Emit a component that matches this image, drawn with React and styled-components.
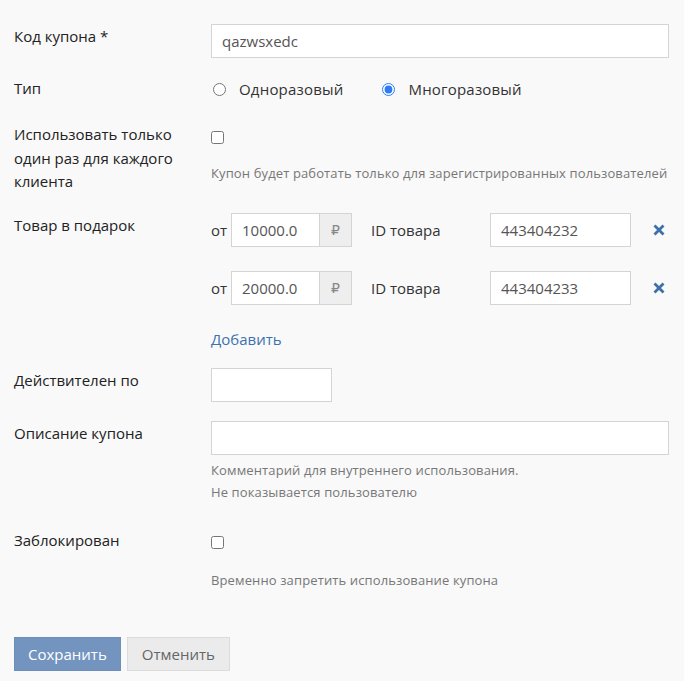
import React from "react";
import styled, { createGlobalStyle } from "styled-components";

const Global = createGlobalStyle`
  html, body { margin: 0; padding: 0; background: #f9f9f9; }
  body { font-family: "Open Sans", "Noto Sans", sans-serif; color: #222; }
  * { box-sizing: border-box; }
`;

const Page = styled.div`
  padding: 24px 15px 11px 14px;
  display: flex;
  flex-direction: column;
`;

const Row = styled.div`
  display: grid;
  grid-template-columns: 197px minmax(0, 1fr);
  margin-top: ${(p) => p.$mt || 0}px;
`;

const Label = styled.div`
  font-size: 15px;
  line-height: ${(p) => p.$lh || 24}px;
  color: #222;
`;

const Field = styled.div`
  display: flex;
  flex-direction: column;
  align-items: flex-start;
`;

const TextInput = styled.input`
  height: 34px;
  width: ${(p) => p.$w || "100%"};
  border: 1px solid #d4d4d4;
  background: #fff;
  padding: 0 10px;
  font-family: inherit;
  font-size: 15px;
  color: #555;
  outline: none;
  border-radius: 0;
`;

const RadioGroup = styled.div`
  display: flex;
  align-items: center;
  height: 24px;
  gap: 37px;
`;

const RadioLabel = styled.label`
  display: flex;
  align-items: center;
  gap: 13px;
  font-size: 15px;
  letter-spacing: 0.2px;
  color: #333;
  margin-top: 2px;
`;

const Radio = styled.input.attrs({ type: "radio" })`
  margin: 0 0 0 2px;
  width: 13px;
  height: 13px;
  accent-color: #2f7bf5;
`;

const Checkbox = styled.input.attrs({ type: "checkbox" })`
  margin: 8px 0 0 0;
  width: 13px;
  height: 13px;
`;

const Hint = styled.div`
  font-size: 13px;
  line-height: 22px;
  letter-spacing: 0.12px;
  white-space: nowrap;
  color: #777;
  margin-top: ${(p) => p.$mt || 0}px;
`;

const GiftList = styled.div`
  display: flex;
  flex-direction: column;
  gap: 24px;
`;

const GiftRow = styled.div`
  display: flex;
  align-items: center;
  height: 34px;
`;

const Muted = styled.span`
  font-size: 15px;
  color: #333;
  width: ${(p) => p.$w}px;
  flex-shrink: 0;
`;

const InputGroup = styled.div`
  display: flex;
  height: 34px;
  margin-right: 19px;
`;

const Addon = styled.span`
  width: 32px;
  height: 34px;
  display: flex;
  align-items: center;
  justify-content: center;
  background: #eeeeee;
  border: 1px solid #d4d4d4;
  border-left: none;
  color: #888;
  font-size: 14px;
  font-family: "DejaVu Sans", sans-serif;
`;

const RemoveBtn = styled.button`
  border: none;
  background: none;
  padding: 0;
  margin-left: 22px;
  width: 12px;
  height: 12px;
  display: flex;
  cursor: pointer;
`;

const AddLink = styled.a`
  font-size: 15px;
  line-height: 24px;
  color: #3e72ad;
  text-decoration: none;
  margin-top: 22px;
`;

const Buttons = styled.div`
  display: flex;
  gap: 6px;
  margin-top: 46px;
`;

const Button = styled.button`
  height: 34px;
  padding: 0 ${(p) => p.$px}px;
  font-family: inherit;
  font-size: 15px;
  border: 1px solid ${(p) => (p.$primary ? "#6e8fba" : "#dcdcdc")};
  background: ${(p) => (p.$primary ? "#7294bf" : "#ebebeb")};
  color: ${(p) => (p.$primary ? "#fff" : "#666")};
  border-radius: 0;
`;

const XIcon = () => (
  <svg width="12" height="12" viewBox="0 0 12 12">
    <path d="M1.5 1.5 L10.5 10.5 M10.5 1.5 L1.5 10.5" stroke="#3d6fa9" strokeWidth="2.8" strokeLinecap="butt" />
  </svg>
);

const gifts = [
  { from: "10000.0", id: "443404232" },
  { from: "20000.0", id: "443404233" },
];

export default function App() {
  return (
    <>
      <Global />
      <Page>
        <Row>
          <Label>Код купона *</Label>
          <Field>
            <TextInput defaultValue="qazwsxedc" />
          </Field>
        </Row>

        <Row $mt={18}>
          <Label>Тип</Label>
          <RadioGroup>
            <RadioLabel>
              <Radio name="type" />
              Одноразовый
            </RadioLabel>
            <RadioLabel>
              <Radio name="type" defaultChecked />
              Многоразовый
            </RadioLabel>
          </RadioGroup>
        </Row>

        <Row $mt={23}>
          <Label $lh={23.5}>
            Использовать только
            <br />
            один раз для каждого
            <br />
            клиента
          </Label>
          <Field>
            <Checkbox />
            <Hint $mt={18}>Купон будет работать только для зарегистрированных пользователей</Hint>
          </Field>
        </Row>

        <Row $mt={19}>
          <Label>Товар в подарок</Label>
          <Field>
            <GiftList>
              {gifts.map((g) => (
                <GiftRow key={g.id}>
                  <Muted $w={20}>от</Muted>
                  <InputGroup>
                    <TextInput $w="89px" defaultValue={g.from} />
                    <Addon>₽</Addon>
                  </InputGroup>
                  <Muted $w={119}>ID товара</Muted>
                  <TextInput $w="141px" defaultValue={g.id} />
                  <RemoveBtn>
                    <XIcon />
                  </RemoveBtn>
                </GiftRow>
              ))}
            </GiftList>
            <AddLink href="#">Добавить</AddLink>
          </Field>
        </Row>

        <Row $mt={17}>
          <Label>Действителен по</Label>
          <Field>
            <TextInput $w="121px" />
          </Field>
        </Row>

        <Row $mt={19}>
          <Label>Описание купона</Label>
          <Field>
            <TextInput />
            <Hint $mt={4}>
              Комментарий для внутреннего использования.
              <br />
              Не показывается пользователю
            </Hint>
          </Field>
        </Row>

        <Row $mt={25}>
          <Label>Заблокирован</Label>
          <Field>
            <Checkbox />
            <Hint $mt={20}>Временно запретить использование купона</Hint>
          </Field>
        </Row>

        <Buttons>
          <Button $primary $px={13}>Сохранить</Button>
          <Button $px={14}>Отменить</Button>
        </Buttons>
      </Page>
    </>
  );
}
